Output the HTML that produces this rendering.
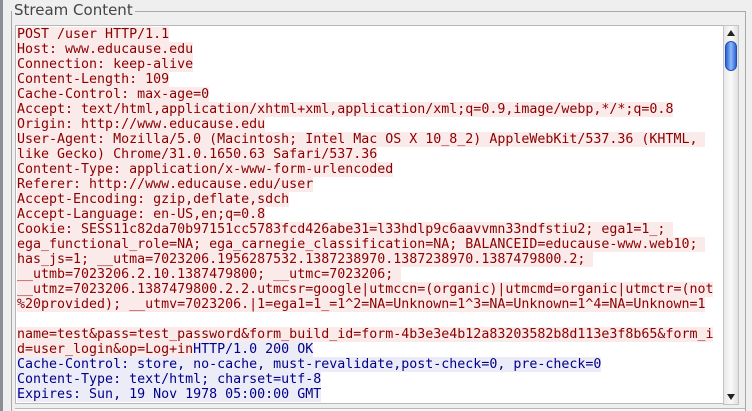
<!DOCTYPE html>
<html><head><meta charset="utf-8"><style>
html,body{margin:0;width:752px;height:411px;overflow:hidden}
body{background:#efefef;position:relative;font-family:"Liberation Sans",sans-serif}
.strip{position:absolute;left:0;top:0;width:3px;height:411px;background:#8a8f94}
.frame{position:absolute;left:11px;top:11px;width:733px;height:400px;border:1px solid #a8a8a8;border-bottom:none}
.legend{position:absolute;left:12px;top:1px;background:#efefef;padding:0 2px;font-size:15px;color:#444;line-height:19px;font-family:"DejaVu Sans",sans-serif}
.ta{position:absolute;left:15px;top:25px;width:707px;height:377px;background:#fff;border:1px solid #b8b8b8;overflow:hidden}
.txt{position:absolute;left:1px;top:1px;font-family:"DejaVu Sans Mono",monospace;font-size:13.3px;line-height:15px;white-space:pre}
.r{color:#8b0000;background:#fbeaea}
.b{color:#000088;background:#ececf8}
.sb{position:absolute;left:723px;top:25px;width:14px;height:378px;background:linear-gradient(90deg,#e8e8e8,#fafafa 50%,#e0e0e0);border:1px solid #c4c4c4}
.th{position:absolute;left:1px;top:15px;width:10px;height:28px;border:1px solid #1d4fb8;border-radius:6px;background:linear-gradient(90deg,#2a64d8,#8fb8f5 50%,#2a64d8)}
.au{position:absolute;left:3px;top:4px;width:0;height:0;border-left:4px solid transparent;border-right:4px solid transparent;border-bottom:6px solid #222}
.ad{position:absolute;left:3px;bottom:4px;width:0;height:0;border-left:4px solid transparent;border-right:4px solid transparent;border-top:6px solid #222}
.bl{position:absolute;left:15px;top:408px;width:730px;height:3px;border-top:1px solid #b8b8b8;background:#fafafa}
</style></head><body>
<div class="strip"></div>
<div class="frame"></div>
<div class="legend">Stream Content</div>
<div class="ta"><div class="txt"><span class="r">POST /user HTTP/1.1</span>
<span class="r">Host: www.educause.edu</span>
<span class="r">Connection: keep-alive</span>
<span class="r">Content-Length: 109</span>
<span class="r">Cache-Control: max-age=0</span>
<span class="r">Accept: text/html,application/xhtml+xml,application/xml;q=0.9,image/webp,*/*;q=0.8</span>
<span class="r">Origin: http://www.educause.edu</span>
<span class="r">User-Agent: Mozilla/5.0 (Macintosh; Intel Mac OS X 10_8_2) AppleWebKit/537.36 (KHTML, </span>
<span class="r">like Gecko) Chrome/31.0.1650.63 Safari/537.36</span>
<span class="r">Content-Type: application/x-www-form-urlencoded</span>
<span class="r">Referer: http://www.educause.edu/user</span>
<span class="r">Accept-Encoding: gzip,deflate,sdch</span>
<span class="r">Accept-Language: en-US,en;q=0.8</span>
<span class="r">Cookie: SESS11c82da70b97151cc5783fcd426abe31=l33hdlp9c6aavvmn33ndfstiu2; ega1=1_; </span>
<span class="r">ega_functional_role=NA; ega_carnegie_classification=NA; BALANCEID=educause-www.web10; </span>
<span class="r">has_js=1; __utma=7023206.1956287532.1387238970.1387238970.1387479800.2; </span>
<span class="r">__utmb=7023206.2.10.1387479800; __utmc=7023206; </span>
<span class="r">__utmz=7023206.1387479800.2.2.utmcsr=google|utmccn=(organic)|utmcmd=organic|utmctr=(not</span>
<span class="r">%20provided); __utmv=7023206.|1=ega1=1_=1^2=NA=Unknown=1^3=NA=Unknown=1^4=NA=Unknown=1</span>

<span class="r">name=test&amp;pass=test_password&amp;form_build_id=form-4b3e3e4b12a83203582b8d113e3f8b65&amp;form_i</span>
<span class="r">d=user_login&amp;op=Log+in</span><span class="b">HTTP/1.0 200 OK</span>
<span class="b">Cache-Control: store, no-cache, must-revalidate,post-check=0, pre-check=0</span>
<span class="b">Content-Type: text/html; charset=utf-8</span>
<span class="b">Expires: Sun, 19 Nov 1978 05:00:00 GMT</span></div></div>
<div class="sb"><div class="au"></div><div class="th"></div><div class="ad"></div></div>
<div class="bl"></div>
</body></html>
